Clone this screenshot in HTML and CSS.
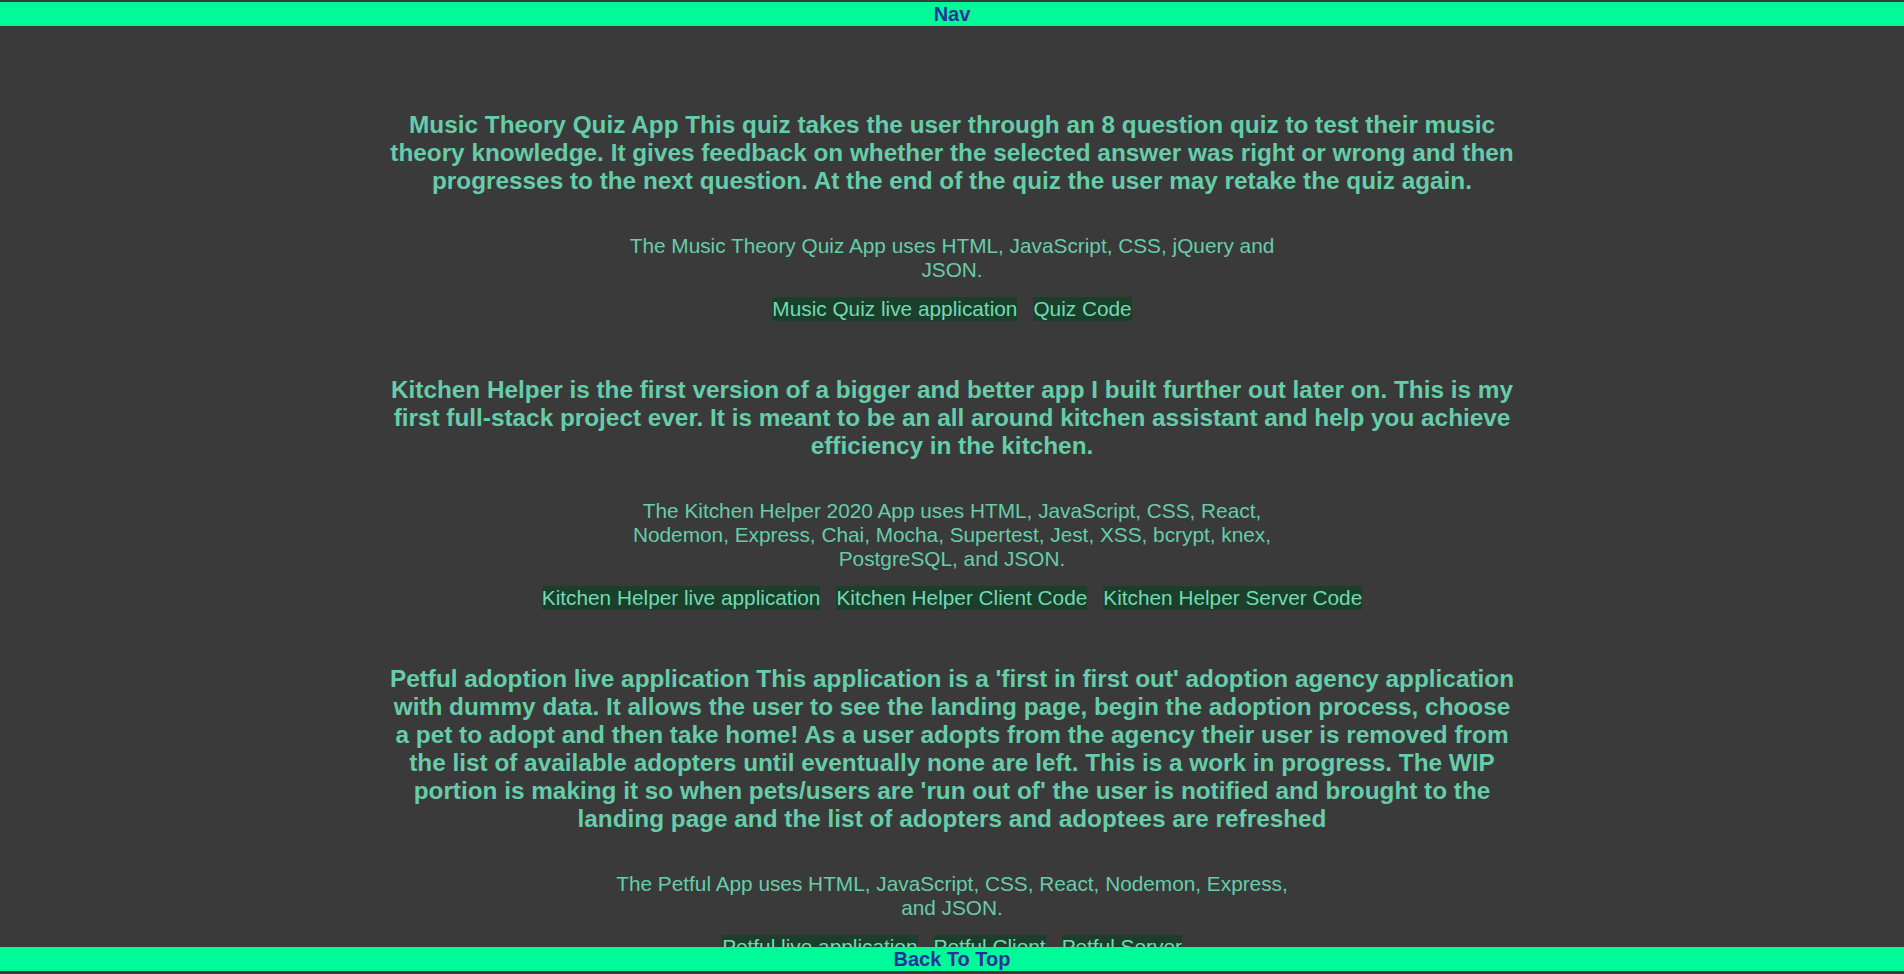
FILE: index.html
```html
<!DOCTYPE html>
<html lang="en">
<head>
<meta charset="utf-8">
<title>Projects</title>
<link rel="stylesheet" href="styles.css">
</head>
<body>
<nav class="topbar"><span class="bar-label">Nav</span></nav>
<main class="projects">
  <section class="project">
    <h3 class="project-title">Music Theory Quiz App This quiz takes the user through an 8 question quiz to test their music theory knowledge. It gives feedback on whether the selected answer was right or wrong and then progresses to the next question. At the end of the quiz the user may retake the quiz again.</h3>
    <p class="project-tech">The Music Theory Quiz App uses HTML, JavaScript, CSS, jQuery and JSON.</p>
    <div class="project-links">
      <a class="project-link" href="#">Music Quiz live application</a>
      <a class="project-link" href="#">Quiz Code</a>
    </div>
  </section>
  <section class="project">
    <h3 class="project-title">Kitchen Helper is the first version of a bigger and better app I built further out later on. This is my first full-stack project ever. It is meant to be an all around kitchen assistant and help you achieve efficiency in the kitchen.</h3>
    <p class="project-tech">The Kitchen Helper 2020 App uses HTML, JavaScript, CSS, React, Nodemon, Express, Chai, Mocha, Supertest, Jest, XSS, bcrypt, knex, PostgreSQL, and JSON.</p>
    <div class="project-links">
      <a class="project-link" href="#">Kitchen Helper live application</a>
      <a class="project-link" href="#">Kitchen Helper Client Code</a>
      <a class="project-link" href="#">Kitchen Helper Server Code</a>
    </div>
  </section>
  <section class="project">
    <h3 class="project-title">Petful adoption live application This application is a 'first in first out' adoption agency application with dummy data. It allows the user to see the landing page, begin the adoption process, choose a pet to adopt and then take home! As a user adopts from the agency their user is removed from the list of available adopters until eventually none are left. This is a work in progress. The WIP portion is making it so when pets/users are 'run out of' the user is notified and brought to the landing page and the list of adopters and adoptees are refreshed</h3>
    <p class="project-tech">The Petful App uses HTML, JavaScript, CSS, React, Nodemon, Express, and JSON.</p>
    <div class="project-links">
      <a class="project-link" href="#">Petful live application</a>
      <a class="project-link" href="#">Petful Client</a>
      <a class="project-link" href="#">Petful Server</a>
    </div>
  </section>
</main>
<footer class="bottombar"><a class="bar-label" href="#">Back To Top</a></footer>
</body>
</html>
```

FILE: styles.css
```css
html, body {
  margin: 0;
  padding: 0;
}

body {
  background: #3a3a3a;
  font-family: "Liberation Sans", Arial, sans-serif;
  color: #66cdaa;
  min-height: 100vh;
}

.topbar,
.bottombar {
  position: fixed;
  left: 0;
  right: 0;
  height: 24px;
  background: #00fa9a;
  display: flex;
  justify-content: center;
  align-items: center;
  z-index: 10;
}

.topbar {
  top: 2px;
}

.bottombar {
  bottom: 3px;
}

.bar-label {
  font-size: 20px;
  font-weight: bold;
  line-height: 24px;
  color: #2b2f9b;
  text-decoration: none;
}

.projects {
  padding: 111px 0 60px;
  display: flex;
  flex-direction: column;
  align-items: center;
  gap: 55px;
}

.project {
  display: flex;
  flex-direction: column;
  align-items: center;
  text-align: center;
}

.project-title {
  width: 1132px;
  margin: 0 0 39px;
  font-size: 24.34px;
  font-weight: bold;
  line-height: 28px;
}

.project-tech {
  max-width: 690px;
  margin: 0 0 15px;
  font-size: 20.8px;
  line-height: 24px;
}

.project-links {
  display: flex;
  justify-content: center;
  gap: 16px;
}

.project-link {
  font-size: 20.8px;
  line-height: 24px;
  color: #72d9b5;
  background: #1b3f2b;
  text-decoration: none;
}
```
